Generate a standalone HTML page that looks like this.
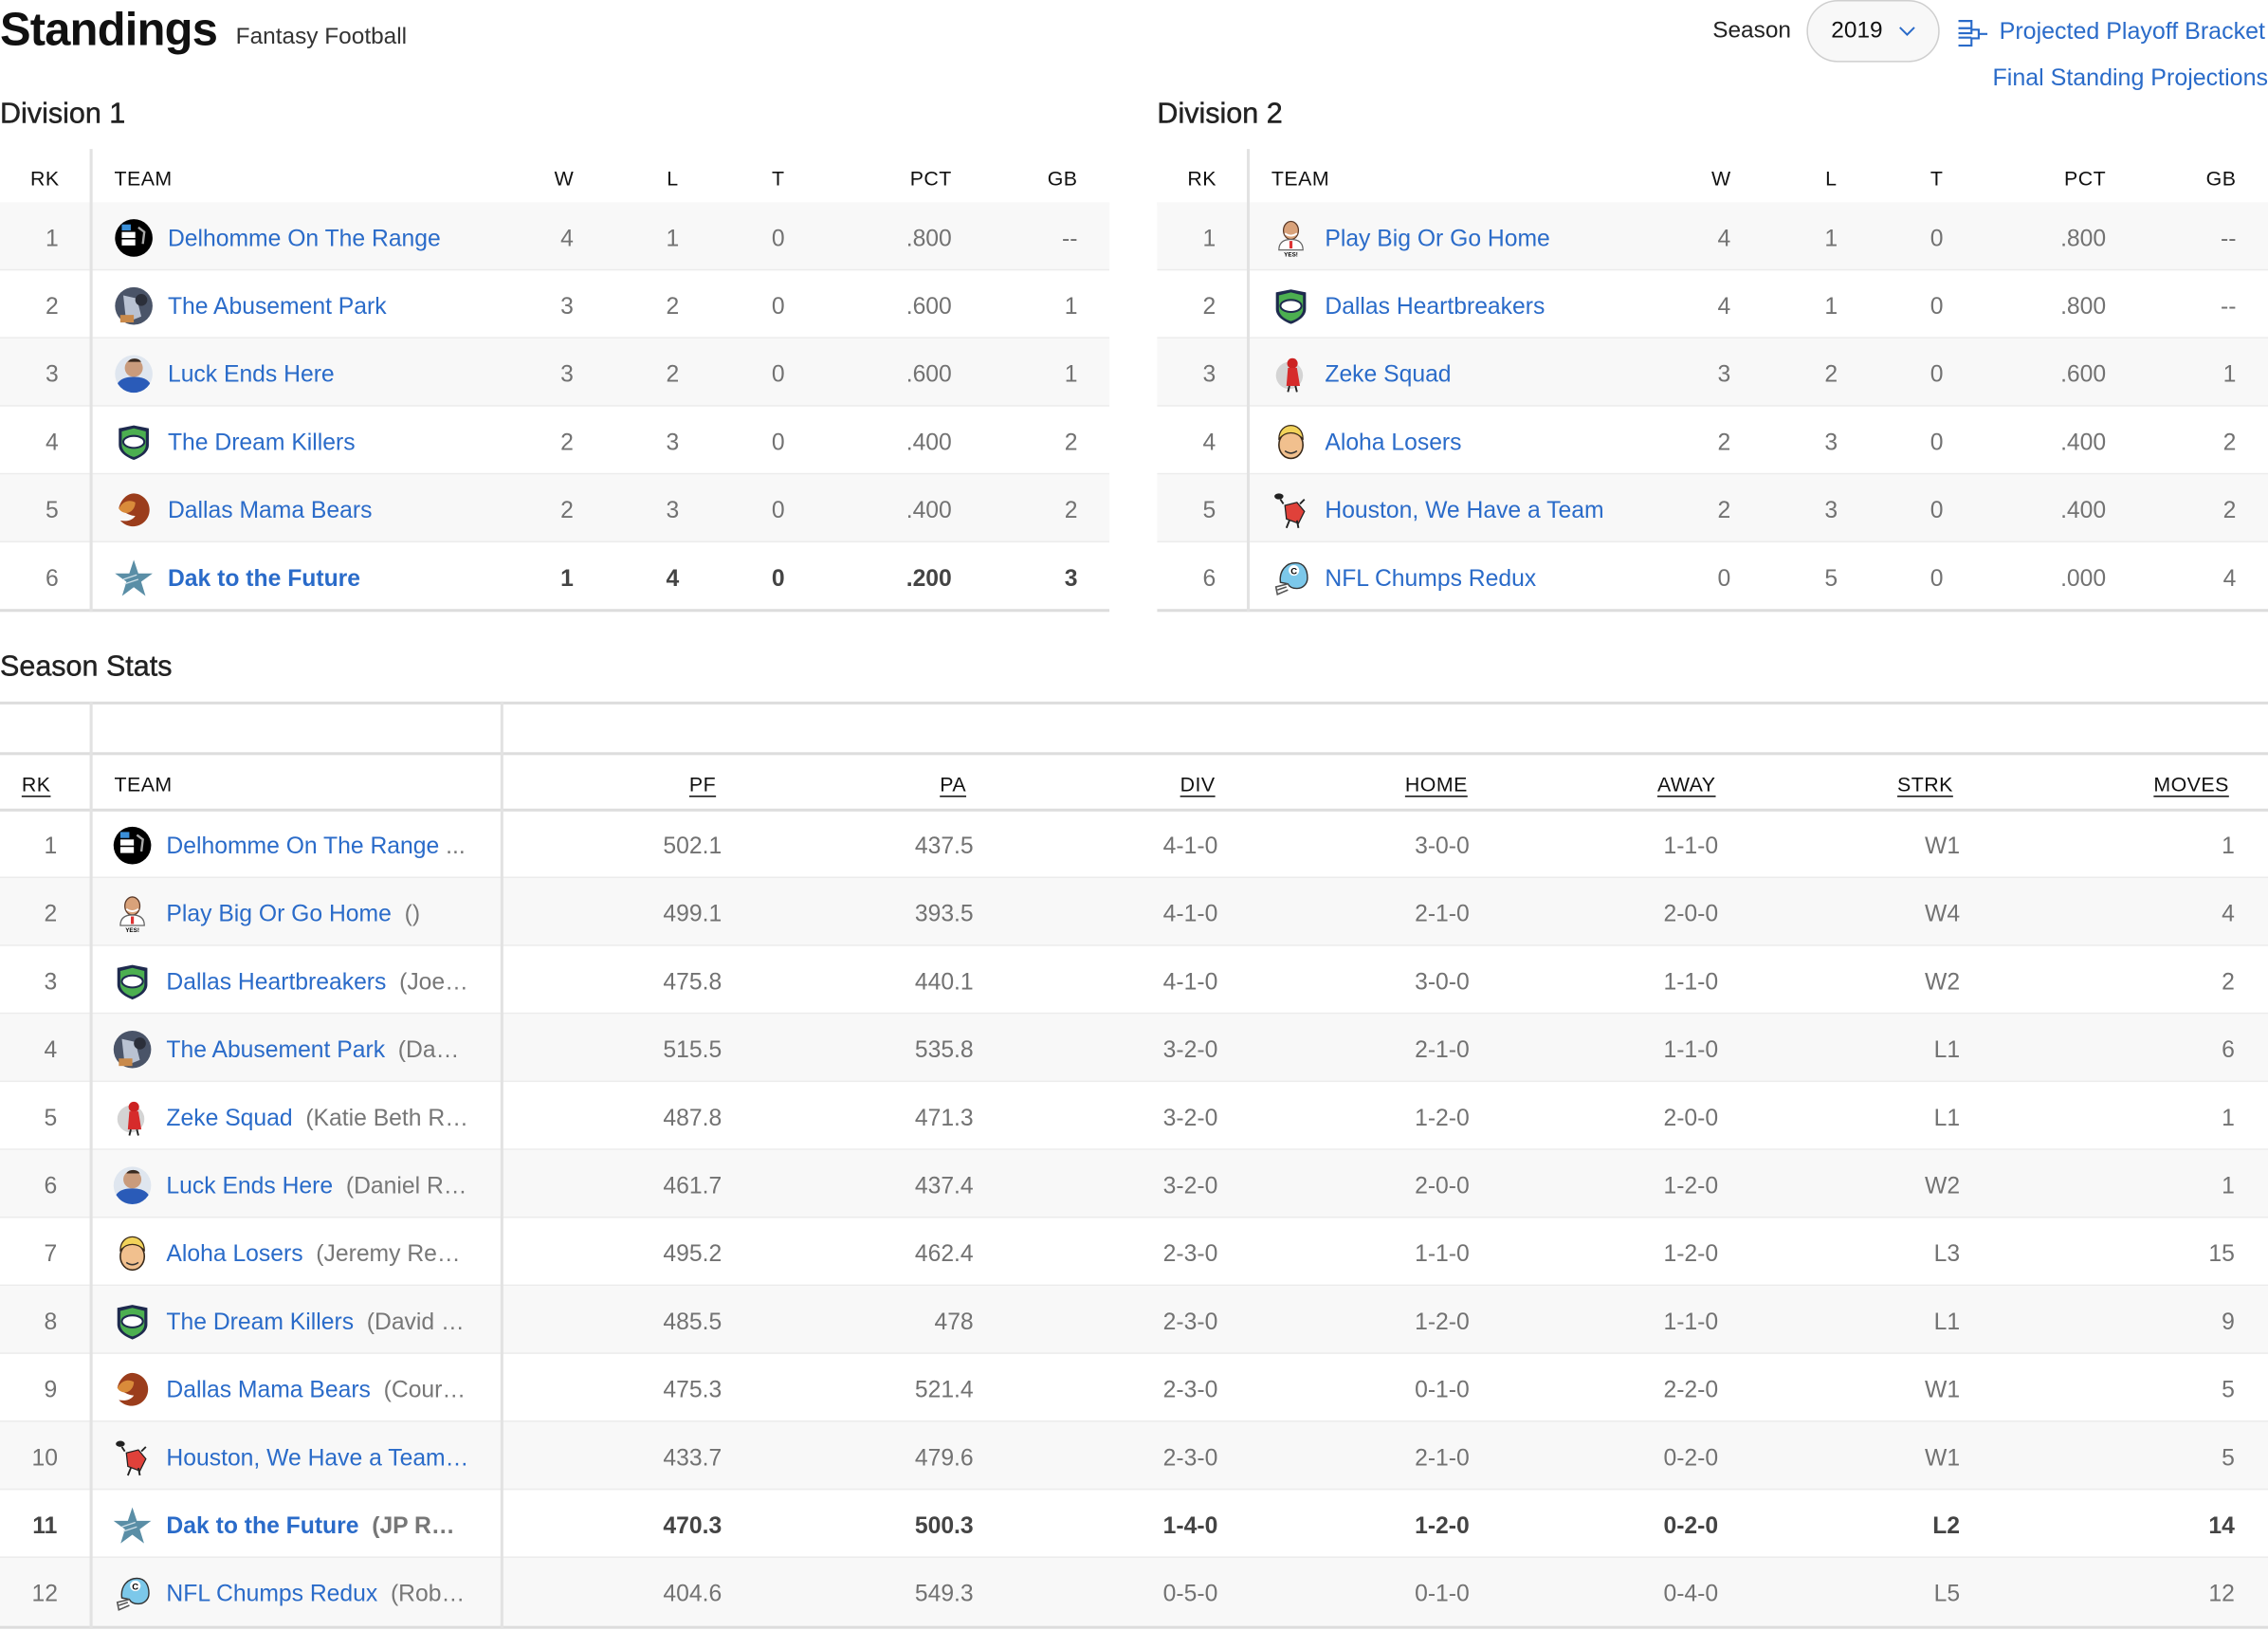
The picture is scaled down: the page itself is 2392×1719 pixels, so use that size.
<!DOCTYPE html>
<html><head><meta charset="utf-8">
<style>
html,body{margin:0;padding:0;background:#fff;width:2392px;height:1718px;overflow:hidden}
#w{position:absolute;left:0;top:0;width:1568px;height:1127px;transform:scale(1.52551);transform-origin:0 0;font-family:"Liberation Sans",Arial,sans-serif;color:#222}
.a{position:absolute;white-space:nowrap}
.blue{color:#2a6bc9}
.tbl{position:absolute}
.hd{position:absolute;left:0;right:0;font-size:14px;color:#111;letter-spacing:.3px}
.row{position:absolute;left:0;right:0;height:47px;font-size:16.2px;color:#727272;border-bottom:1px solid #ececec;box-sizing:border-box}
.row.g{background:#f8f8f8}
.row .a{top:2px;line-height:47px}
.hd .a{top:1px}
.c{width:80px;text-align:center;margin-left:-40px}
.r{text-align:right}
.vl{position:absolute;width:2px;background:#e2e2e2}
.ic{position:absolute;width:27px;height:27px;top:11px}
.b{font-weight:bold;color:#444}
.u{text-decoration:underline;text-underline-offset:3px}
.own{color:#777}
.t2{font-size:20px;color:#222;-webkit-text-stroke:.3px #222}
</style></head><body>
<svg width="0" height="0" style="position:absolute">
<defs>
<symbol id="dh" viewBox="0 0 26 26"><circle cx="13" cy="13" r="12.5" fill="#000"/><rect x="5" y="4" width="6" height="4" fill="#3a8fd8"/><rect x="5" y="9" width="9" height="4" fill="#fff"/><rect x="5" y="14" width="9" height="4" fill="#fff"/><path d="M16 6l4 3-1 8" stroke="#aaa" stroke-width="1.5" fill="none"/></symbol>
<symbol id="ab" viewBox="0 0 26 26"><circle cx="13" cy="13" r="12.5" fill="#4a5468"/><path d="M6 6l9 2 3 12-10 4z" fill="#b9c2d2"/><rect x="4" y="19" width="9" height="5" fill="#c98a4b"/><circle cx="18" cy="9" r="4" fill="#2b2f3a"/></symbol>
<symbol id="lk" viewBox="0 0 26 26"><clipPath id="cl"><circle cx="13" cy="13" r="12.5"/></clipPath><g clip-path="url(#cl)"><rect width="26" height="26" fill="#dfe6ef"/><circle cx="13" cy="9" r="6" fill="#c99b7c"/><path d="M9 5a5 4 0 0 1 9 0z" fill="#3a2a20"/><path d="M0 26c1-9 6-11 13-11s12 2 13 11z" fill="#2a5bb8"/></g></symbol>
<symbol id="sh" viewBox="0 0 26 26"><path d="M3 4l10-2 10 2v11c0 5-5 8-10 10C8 23 3 20 3 15z" fill="#1e2a4e"/><path d="M5 6l8-2 8 2v9c0 4-4 7-8 8-4-1-8-4-8-8z" fill="#4caf50"/><ellipse cx="13" cy="13" rx="7" ry="4" fill="#fff" stroke="#1e2a4e" stroke-width="1.3"/></symbol>
<symbol id="mb" viewBox="0 0 26 26"><path d="M13 2a11 11 0 1 1-9 18c4 1 8 0 10-3-3 0-7-2-11-5 1-5 5-10 10-10z" fill="#9b3d1c"/><path d="M3 12c3-5 7-6 11-4 0 4-3 7-6 7-2 0-4-1-5-3z" fill="#d98b3a"/></symbol>
<symbol id="st" viewBox="0 0 26 26"><path d="M13 1l3 9h9.5l-7.6 5.6 2.9 9.4-7.8-5.8-7.8 5.8 2.9-9.4L.5 10H10z" fill="#5a8ea6"/><path d="M6 14l9-3M7 17l9-3" stroke="#cfe0e8" stroke-width=".8"/></symbol>
<symbol id="pb" viewBox="0 0 26 26"><ellipse cx="13" cy="8" rx="5" ry="6" fill="#d9a27a" stroke="#5a3a2a" stroke-width=".8"/><path d="M9 10q4 3 8 0" stroke="#fff" stroke-width="1.2" fill="none"/><path d="M5 21c0-5 3-7 8-7s8 2 8 7z" fill="#fff" stroke="#666" stroke-width=".8"/><rect x="12" y="15" width="2" height="5" fill="#d33"/><text x="13" y="25.5" font-size="4" font-weight="bold" text-anchor="middle" fill="#000" font-family="Liberation Sans">YES!</text></symbol>
<symbol id="zk" viewBox="0 0 26 26"><circle cx="12" cy="14" r="9" fill="#d4d4d4"/><circle cx="14" cy="6" r="3.5" fill="#c22"/><path d="M11 9h6l2 12h-9z" fill="#d62b2b"/><path d="M12 21l-1 4M16 21l1 4" stroke="#222" stroke-width="1.2"/></symbol>
<symbol id="al" viewBox="0 0 26 26"><ellipse cx="13" cy="15" rx="8" ry="9" fill="#f1c08e" stroke="#3a2a1a" stroke-width="1"/><path d="M5 11c0-6 4-9 8-9s8 3 8 9c-3-3-5-4-8-4s-5 1-8 4z" fill="#f2d35a" stroke="#3a2a1a" stroke-width=".8"/><path d="M9 19q4 3 8 0" stroke="#333" fill="none"/></symbol>
<symbol id="ho" viewBox="0 0 26 26"><ellipse cx="5" cy="4" rx="3" ry="2" fill="#222"/><path d="M9 10l8-2 5 6-4 8-8-3z" fill="#e0413a" stroke="#222" stroke-width=".8"/><path d="M8 9l-2-3M19 9l3-3M12 20l-2 5M17 20l1 5" stroke="#222" stroke-width="1.2"/></symbol>
<symbol id="nf" viewBox="0 0 26 26"><path d="M6 16c-1-8 4-13 10-13s8 5 8 10c0 4-3 7-7 7-3 0-5-1-6-3z" fill="#7cc8ea" stroke="#333" stroke-width=".9"/><circle cx="15" cy="8" r="3.5" fill="#fff"/><text x="15" y="10.5" font-size="6" font-weight="bold" text-anchor="middle" font-family="Liberation Sans">C</text><path d="M11 17l-8 2 1 5 7-3M4 21l6-2" stroke="#555" stroke-width="1" fill="#fff"/></symbol>
</defs></svg>
<div id="w">
<div class="a" style="left:0;top:2px;font-size:32px;font-weight:bold;color:#111;letter-spacing:-.5px">Standings</div>
<div class="a" style="left:163px;top:17px;font-size:16px;color:#333">Fantasy Football</div>
<div class="a" style="left:1184px;top:13px;font-size:16px;color:#222">Season</div>
<div class="a" style="left:1249px;top:0;width:92px;height:43px;border:1px solid #cfcfcf;border-radius:22px;background:#f8f8f8;box-sizing:border-box"></div>
<div class="a" style="left:1266px;top:13px;font-size:16px;color:#111">2019</div>
<svg class="a" style="left:1312px;top:17px" width="13" height="9" viewBox="0 0 13 9"><path d="M1.5 2l5 5 5-5" stroke="#2a6bc9" stroke-width="1.3" fill="none"/></svg>
<svg class="a" style="left:1353px;top:13px" width="24" height="20" viewBox="0 0 24 20"><path d="M1 1.5h9v5H1M1 10h9V4.5M10 7.5h5v6h-5M15 10.5h6M1 13h9M1 18.5h9v-5" stroke="#2a6bc9" stroke-width="1.4" fill="none"/></svg>
<div class="a blue" style="right:2px;top:13px;font-size:16.4px">Projected Playoff Bracket</div>
<div class="a blue" style="right:0;top:45px;font-size:16.4px">Final Standing Projections</div>

<div class="a t2" style="left:0;top:68px">Division 1</div>
<div class="a t2" style="left:800px;top:68px">Division 2</div>

<!-- Division 1 -->
<div class="tbl" style="left:0;top:103px;width:767px;height:320px">
 <div class="hd" style="top:0;height:37px;border-bottom:2px solid #ddd"><div class="a c" style="left:31px;line-height:38px">RK</div><div class="a" style="left:79px;line-height:38px">TEAM</div><div class="a c" style="left:390px;line-height:38px">W</div><div class="a c" style="left:465px;line-height:38px">L</div><div class="a c" style="left:538px;line-height:38px">T</div><div class="a r" style="right:109px;line-height:38px">PCT</div><div class="a r" style="right:22px;line-height:38px">GB</div></div>
 <div class="row g" style="top:37px"><div class="a c" style="left:36px">1</div><svg class="ic" style="left:79px"><use href="#dh"/></svg><div class="a blue" style="left:116px">Delhomme On The Range</div><div class="a c" style="left:392px">4</div><div class="a c" style="left:465px">1</div><div class="a c" style="left:538px">0</div><div class="a r" style="right:109px">.800</div><div class="a r" style="right:22px">--</div></div>
 <div class="row" style="top:84px"><div class="a c" style="left:36px">2</div><svg class="ic" style="left:79px"><use href="#ab"/></svg><div class="a blue" style="left:116px">The Abusement Park</div><div class="a c" style="left:392px">3</div><div class="a c" style="left:465px">2</div><div class="a c" style="left:538px">0</div><div class="a r" style="right:109px">.600</div><div class="a r" style="right:22px">1</div></div>
 <div class="row g" style="top:131px"><div class="a c" style="left:36px">3</div><svg class="ic" style="left:79px"><use href="#lk"/></svg><div class="a blue" style="left:116px">Luck Ends Here</div><div class="a c" style="left:392px">3</div><div class="a c" style="left:465px">2</div><div class="a c" style="left:538px">0</div><div class="a r" style="right:109px">.600</div><div class="a r" style="right:22px">1</div></div>
 <div class="row" style="top:178px"><div class="a c" style="left:36px">4</div><svg class="ic" style="left:79px"><use href="#sh"/></svg><div class="a blue" style="left:116px">The Dream Killers</div><div class="a c" style="left:392px">2</div><div class="a c" style="left:465px">3</div><div class="a c" style="left:538px">0</div><div class="a r" style="right:109px">.400</div><div class="a r" style="right:22px">2</div></div>
 <div class="row g" style="top:225px"><div class="a c" style="left:36px">5</div><svg class="ic" style="left:79px"><use href="#mb"/></svg><div class="a blue" style="left:116px">Dallas Mama Bears</div><div class="a c" style="left:392px">2</div><div class="a c" style="left:465px">3</div><div class="a c" style="left:538px">0</div><div class="a r" style="right:109px">.400</div><div class="a r" style="right:22px">2</div></div>
 <div class="row" style="top:272px;border-bottom:2px solid #ddd;height:48px"><div class="a c" style="left:36px">6</div><svg class="ic" style="left:79px"><use href="#st"/></svg><div class="a blue" style="left:116px;font-weight:bold">Dak to the Future</div><div class="a c b" style="left:392px">1</div><div class="a c b" style="left:465px">4</div><div class="a c b" style="left:538px">0</div><div class="a r b" style="right:109px">.200</div><div class="a r b" style="right:22px">3</div></div>
 <div class="vl" style="left:62px;top:0;height:320px"></div>
</div>

<!-- Division 2 -->
<div class="tbl" style="left:800px;top:103px;width:768px;height:320px">
 <div class="hd" style="top:0;height:37px;border-bottom:2px solid #ddd"><div class="a c" style="left:31px;line-height:38px">RK</div><div class="a" style="left:79px;line-height:38px">TEAM</div><div class="a c" style="left:390px;line-height:38px">W</div><div class="a c" style="left:466px;line-height:38px">L</div><div class="a c" style="left:539px;line-height:38px">T</div><div class="a r" style="right:112px;line-height:38px">PCT</div><div class="a r" style="right:22px;line-height:38px">GB</div></div>
 <div class="row g" style="top:37px"><div class="a c" style="left:36px">1</div><svg class="ic" style="left:79px"><use href="#pb"/></svg><div class="a blue" style="left:116px">Play Big Or Go Home</div><div class="a c" style="left:392px">4</div><div class="a c" style="left:466px">1</div><div class="a c" style="left:539px">0</div><div class="a r" style="right:112px">.800</div><div class="a r" style="right:22px">--</div></div>
 <div class="row" style="top:84px"><div class="a c" style="left:36px">2</div><svg class="ic" style="left:79px"><use href="#sh"/></svg><div class="a blue" style="left:116px">Dallas Heartbreakers</div><div class="a c" style="left:392px">4</div><div class="a c" style="left:466px">1</div><div class="a c" style="left:539px">0</div><div class="a r" style="right:112px">.800</div><div class="a r" style="right:22px">--</div></div>
 <div class="row g" style="top:131px"><div class="a c" style="left:36px">3</div><svg class="ic" style="left:79px"><use href="#zk"/></svg><div class="a blue" style="left:116px">Zeke Squad</div><div class="a c" style="left:392px">3</div><div class="a c" style="left:466px">2</div><div class="a c" style="left:539px">0</div><div class="a r" style="right:112px">.600</div><div class="a r" style="right:22px">1</div></div>
 <div class="row" style="top:178px"><div class="a c" style="left:36px">4</div><svg class="ic" style="left:79px"><use href="#al"/></svg><div class="a blue" style="left:116px">Aloha Losers</div><div class="a c" style="left:392px">2</div><div class="a c" style="left:466px">3</div><div class="a c" style="left:539px">0</div><div class="a r" style="right:112px">.400</div><div class="a r" style="right:22px">2</div></div>
 <div class="row g" style="top:225px"><div class="a c" style="left:36px">5</div><svg class="ic" style="left:79px"><use href="#ho"/></svg><div class="a blue" style="left:116px">Houston, We Have a Team</div><div class="a c" style="left:392px">2</div><div class="a c" style="left:466px">3</div><div class="a c" style="left:539px">0</div><div class="a r" style="right:112px">.400</div><div class="a r" style="right:22px">2</div></div>
 <div class="row" style="top:272px;border-bottom:2px solid #ddd;height:48px"><div class="a c" style="left:36px">6</div><svg class="ic" style="left:79px"><use href="#nf"/></svg><div class="a blue" style="left:116px">NFL Chumps Redux</div><div class="a c" style="left:392px">0</div><div class="a c" style="left:466px">5</div><div class="a c" style="left:539px">0</div><div class="a r" style="right:112px">.000</div><div class="a r" style="right:22px">4</div></div>
 <div class="vl" style="left:62px;top:0;height:320px"></div>
</div>

<div class="a t2" style="left:0;top:450px">Season Stats</div>

<!-- Season stats -->
<div class="tbl" style="left:0;top:485px;width:1568px;height:642px">
 <div class="hd" style="top:0;height:37px;border-top:2px solid #ddd;border-bottom:2px solid #ddd;box-sizing:border-box"></div>
 <div class="hd" style="top:37px;height:37px;border-bottom:2px solid #ddd"><div class="a c u" style="left:25px;line-height:38px">RK</div><div class="a" style="left:79px;line-height:38px">TEAM</div><div class="a r u" style="right:1073px;line-height:38px">PF</div><div class="a r u" style="right:900px;line-height:38px">PA</div><div class="a c u" style="left:828px;line-height:38px">DIV</div><div class="a c u" style="left:993px;line-height:38px">HOME</div><div class="a c u" style="left:1166px;line-height:38px">AWAY</div><div class="a c u" style="left:1331px;line-height:38px">STRK</div><div class="a r u" style="right:27px;line-height:38px">MOVES</div></div>
 <div class="row" style="top:75px"><div class="a c" style="left:35px">1</div><svg class="ic" style="left:78px"><use href="#dh"/></svg><div class="a blue" style="left:115px">Delhomme On The Range <span class="own">...</span></div><div class="a r" style="right:1069px">502.1</div><div class="a r" style="right:895px">437.5</div><div class="a c" style="left:823px">4-1-0</div><div class="a c" style="left:997px">3-0-0</div><div class="a c" style="left:1169px">1-1-0</div><div class="a r" style="right:213px">W1</div><div class="a r" style="right:23px">1</div></div>
 <div class="row g" style="top:122px"><div class="a c" style="left:35px">2</div><svg class="ic" style="left:78px"><use href="#pb"/></svg><div class="a blue" style="left:115px">Play Big Or Go Home <span class="own">&nbsp;()</span></div><div class="a r" style="right:1069px">499.1</div><div class="a r" style="right:895px">393.5</div><div class="a c" style="left:823px">4-1-0</div><div class="a c" style="left:997px">2-1-0</div><div class="a c" style="left:1169px">2-0-0</div><div class="a r" style="right:213px">W4</div><div class="a r" style="right:23px">4</div></div>
 <div class="row" style="top:169px"><div class="a c" style="left:35px">3</div><svg class="ic" style="left:78px"><use href="#sh"/></svg><div class="a blue" style="left:115px">Dallas Heartbreakers <span class="own">&nbsp;(Joe…</span></div><div class="a r" style="right:1069px">475.8</div><div class="a r" style="right:895px">440.1</div><div class="a c" style="left:823px">4-1-0</div><div class="a c" style="left:997px">3-0-0</div><div class="a c" style="left:1169px">1-1-0</div><div class="a r" style="right:213px">W2</div><div class="a r" style="right:23px">2</div></div>
 <div class="row g" style="top:216px"><div class="a c" style="left:35px">4</div><svg class="ic" style="left:78px"><use href="#ab"/></svg><div class="a blue" style="left:115px">The Abusement Park <span class="own">&nbsp;(Da…</span></div><div class="a r" style="right:1069px">515.5</div><div class="a r" style="right:895px">535.8</div><div class="a c" style="left:823px">3-2-0</div><div class="a c" style="left:997px">2-1-0</div><div class="a c" style="left:1169px">1-1-0</div><div class="a r" style="right:213px">L1</div><div class="a r" style="right:23px">6</div></div>
 <div class="row" style="top:263px"><div class="a c" style="left:35px">5</div><svg class="ic" style="left:78px"><use href="#zk"/></svg><div class="a blue" style="left:115px">Zeke Squad <span class="own">&nbsp;(Katie Beth R…</span></div><div class="a r" style="right:1069px">487.8</div><div class="a r" style="right:895px">471.3</div><div class="a c" style="left:823px">3-2-0</div><div class="a c" style="left:997px">1-2-0</div><div class="a c" style="left:1169px">2-0-0</div><div class="a r" style="right:213px">L1</div><div class="a r" style="right:23px">1</div></div>
 <div class="row g" style="top:310px"><div class="a c" style="left:35px">6</div><svg class="ic" style="left:78px"><use href="#lk"/></svg><div class="a blue" style="left:115px">Luck Ends Here <span class="own">&nbsp;(Daniel R…</span></div><div class="a r" style="right:1069px">461.7</div><div class="a r" style="right:895px">437.4</div><div class="a c" style="left:823px">3-2-0</div><div class="a c" style="left:997px">2-0-0</div><div class="a c" style="left:1169px">1-2-0</div><div class="a r" style="right:213px">W2</div><div class="a r" style="right:23px">1</div></div>
 <div class="row" style="top:357px"><div class="a c" style="left:35px">7</div><svg class="ic" style="left:78px"><use href="#al"/></svg><div class="a blue" style="left:115px">Aloha Losers <span class="own">&nbsp;(Jeremy Re…</span></div><div class="a r" style="right:1069px">495.2</div><div class="a r" style="right:895px">462.4</div><div class="a c" style="left:823px">2-3-0</div><div class="a c" style="left:997px">1-1-0</div><div class="a c" style="left:1169px">1-2-0</div><div class="a r" style="right:213px">L3</div><div class="a r" style="right:23px">15</div></div>
 <div class="row g" style="top:404px"><div class="a c" style="left:35px">8</div><svg class="ic" style="left:78px"><use href="#sh"/></svg><div class="a blue" style="left:115px">The Dream Killers <span class="own">&nbsp;(David …</span></div><div class="a r" style="right:1069px">485.5</div><div class="a r" style="right:895px">478</div><div class="a c" style="left:823px">2-3-0</div><div class="a c" style="left:997px">1-2-0</div><div class="a c" style="left:1169px">1-1-0</div><div class="a r" style="right:213px">L1</div><div class="a r" style="right:23px">9</div></div>
 <div class="row" style="top:451px"><div class="a c" style="left:35px">9</div><svg class="ic" style="left:78px"><use href="#mb"/></svg><div class="a blue" style="left:115px">Dallas Mama Bears <span class="own">&nbsp;(Cour…</span></div><div class="a r" style="right:1069px">475.3</div><div class="a r" style="right:895px">521.4</div><div class="a c" style="left:823px">2-3-0</div><div class="a c" style="left:997px">0-1-0</div><div class="a c" style="left:1169px">2-2-0</div><div class="a r" style="right:213px">W1</div><div class="a r" style="right:23px">5</div></div>
 <div class="row g" style="top:498px"><div class="a c" style="left:31px">10</div><svg class="ic" style="left:78px"><use href="#ho"/></svg><div class="a blue" style="left:115px">Houston, We Have a Team…</div><div class="a r" style="right:1069px">433.7</div><div class="a r" style="right:895px">479.6</div><div class="a c" style="left:823px">2-3-0</div><div class="a c" style="left:997px">2-1-0</div><div class="a c" style="left:1169px">0-2-0</div><div class="a r" style="right:213px">W1</div><div class="a r" style="right:23px">5</div></div>
 <div class="row" style="top:545px"><div class="a c b" style="left:31px">11</div><svg class="ic" style="left:78px"><use href="#st"/></svg><div class="a blue" style="left:115px;font-weight:bold">Dak to the Future <span class="own">&nbsp;(JP R…</span></div><div class="a r b" style="right:1069px">470.3</div><div class="a r b" style="right:895px">500.3</div><div class="a c b" style="left:823px">1-4-0</div><div class="a c b" style="left:997px">1-2-0</div><div class="a c b" style="left:1169px">0-2-0</div><div class="a r b" style="right:213px">L2</div><div class="a r b" style="right:23px">14</div></div>
 <div class="row g" style="top:592px;height:49px;border-bottom:2px solid #ddd"><div class="a c" style="left:31px">12</div><svg class="ic" style="left:78px"><use href="#nf"/></svg><div class="a blue" style="left:115px">NFL Chumps Redux <span class="own">&nbsp;(Rob…</span></div><div class="a r" style="right:1069px">404.6</div><div class="a r" style="right:895px">549.3</div><div class="a c" style="left:823px">0-5-0</div><div class="a c" style="left:997px">0-1-0</div><div class="a c" style="left:1169px">0-4-0</div><div class="a r" style="right:213px">L5</div><div class="a r" style="right:23px">12</div></div>
 <div class="vl" style="left:62px;top:0;height:641px"></div>
 <div class="vl" style="left:346px;top:0;height:641px"></div>
</div>
</div>
</body></html>
